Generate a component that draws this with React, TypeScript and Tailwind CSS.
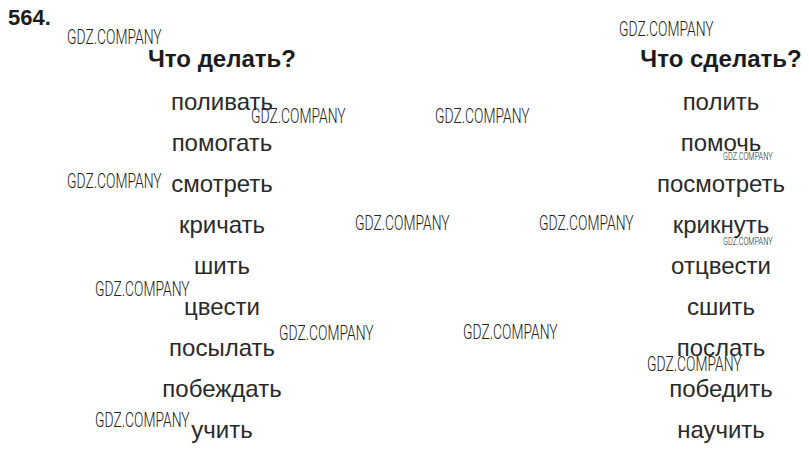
const left = [
  "поливать",
  "помогать",
  "смотреть",
  "кричать",
  "шить",
  "цвести",
  "посылать",
  "побеждать",
  "учить",
];

const right = [
  "полить",
  "помочь",
  "посмотреть",
  "крикнуть",
  "отцвести",
  "сшить",
  "послать",
  "победить",
  "научить",
];

interface ColProp {
  title: string;
  words: string[];
  className: string;
}

const Column = ({ title, words, className }: ColProp) => {
  return (
    <div className={"flex flex-col items-center " + className}>
      <div className="text-[24px] leading-[26px] font-bold whitespace-nowrap text-[#1c1c1c]">{title}</div>
      <div className="mt-[9px] flex flex-col items-center">
        {words.map((w) => (
          <div key={w} className="h-[41px] text-[24px] leading-[41px] whitespace-nowrap">
            {w}
          </div>
        ))}
      </div>
    </div>
  );
};

interface MarkProp {
  className: string;
  small?: boolean;
}

// watermark stamps lie over the page
const Mark = ({ className, small }: MarkProp) => {
  return (
    <div
      className={
        "absolute origin-left scale-x-[0.66] whitespace-nowrap leading-none font-['Roboto',sans-serif] font-light text-[#222] " +
        (small ? "text-[11px] " : "text-[21px] ") +
        className
      }
    >
      GDZ.COMPANY
    </div>
  );
};

const App = () => {
  return (
    <div className="relative w-[809px] h-[453px] overflow-hidden bg-white text-[#2a2a2a] font-['Liberation_Sans',Arial,sans-serif]">
      <div className="pl-2 pt-[7px] text-[22px] leading-[22px] font-bold text-[#1c1c1c]">564.</div>

      <div className="mt-[17px] flex">
        <Column title="Что делать?" words={left} className="ml-[122px] w-[200px]" />
        <Column title="Что сделать?" words={right} className="ml-[319px] w-[160px]" />
      </div>

      <Mark className="left-[67px] top-[27px]" />
      <Mark className="left-[619px] top-[19px]" />
      <Mark className="left-[251px] top-[106px]" />
      <Mark className="left-[435px] top-[106px]" />
      <Mark className="left-[67px] top-[171px]" />
      <Mark className="left-[355px] top-[213px]" />
      <Mark className="left-[539px] top-[213px]" />
      <Mark className="left-[95px] top-[279px]" />
      <Mark className="left-[279px] top-[323px]" />
      <Mark className="left-[463px] top-[322px]" />
      <Mark className="left-[647px] top-[354px]" />
      <Mark className="left-[95px] top-[410px]" />
      <Mark small className="left-[723px] top-[151px]" />
      <Mark small className="left-[723px] top-[236px]" />
    </div>
  );
};

export default App;
